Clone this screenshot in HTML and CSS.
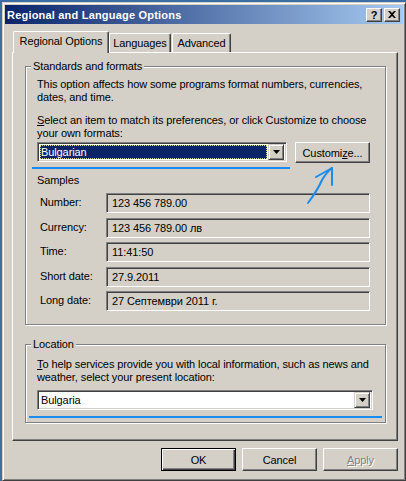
FILE: index.html
```html
<!DOCTYPE html>
<html>
<head>
<meta charset="utf-8">
<link rel="stylesheet" href="styles.css">
</head>
<body>
<div class="desktop">
  <div class="window">
    <div class="titlebar">
      <span class="title">Regional and Language Options</span>
      <div class="tb-buttons">
        <span class="tb-btn help">?</span>
        <span class="tb-btn close"><svg width="8" height="7" viewBox="0 0 8 7"><path d="M0 0h2l2 2 2-2h2L5 3.5 8 7H6L4 5 2 7H0l3-3.5z" fill="#000"/></svg></span>
      </div>
    </div>
    <div class="client">
      <div class="tabs">
        <div class="tab active">Regional Options</div>
        <div class="tab t-lang">Languages</div>
        <div class="tab t-adv">Advanced</div>
      </div>
      <div class="panel">
        <div class="group g1">
          <div class="legend">Standards and formats</div>
          <p class="text t1">This option affects how some programs format numbers, currencies,<br>dates, and time.</p>
          <p class="text t2"><u>S</u>elect an item to match its preferences, or click Customize to choose<br>your own formats:</p>
          <div class="combo-row">
            <div class="combo c1">
              <div class="combo-field"><span class="hl">Bulgarian</span></div>
              <div class="drop-btn"><svg width="7" height="4" viewBox="0 0 7 4"><path d="M0 0h7L3.5 4z" fill="#000"/></svg></div>
            </div>
            <div class="btn customize">Customi<u>z</u>e...</div>
          </div>
          <div class="mark mark1"></div>
          <div class="samples-label">Samples</div>
          <div class="samples">
            <div class="row"><span class="lbl">Number:</span><div class="ro">123 456 789.00</div></div>
            <div class="row"><span class="lbl">Currency:</span><div class="ro">123 456 789.00 лв</div></div>
            <div class="row"><span class="lbl">Time:</span><div class="ro">11:41:50</div></div>
            <div class="row"><span class="lbl">Short date:</span><div class="ro">27.9.2011</div></div>
            <div class="row"><span class="lbl">Long date:</span><div class="ro">27 Септември 2011 г.</div></div>
          </div>
        </div>
        <div class="group g2">
          <div class="legend">Location</div>
          <p class="text t3"><u>T</u>o help services provide you with local information, such as news and<br>weather, select your present location:</p>
          <div class="combo c2">
            <div class="combo-field plain">Bulgaria</div>
            <div class="drop-btn"><svg width="7" height="4" viewBox="0 0 7 4"><path d="M0 0h7L3.5 4z" fill="#000"/></svg></div>
          </div>
          <div class="mark mark2"></div>
        </div>
      </div>
      <div class="buttons">
        <div class="btn dlg default">OK</div>
        <div class="btn dlg">Cancel</div>
        <div class="btn dlg disabled"><u>A</u>pply</div>
      </div>
    </div>
  </div>
  <svg class="arrow" width="406" height="481" viewBox="0 0 406 481">
    <path d="M308 203 C 314 195, 319 187, 322 180 C 325 175, 328 171, 332 168" fill="none" stroke="#1a8cf0" stroke-width="2" stroke-linecap="round"/>
    <path d="M316 177 L332 168 L332 185" fill="none" stroke="#1a8cf0" stroke-width="2" stroke-linecap="round" stroke-linejoin="round"/>
  </svg>
</div>
</body>
</html>
```

FILE: styles.css
```css
* { box-sizing: border-box; }
html, body { margin: 0; padding: 0; }
body { font-family: "Liberation Sans", Arial, sans-serif; font-size: 11px; color: #000; letter-spacing: -0.1px; }

.desktop {
  width: 406px;
  height: 481px;
  background: #3a6ea5;
  overflow: hidden;
  position: relative;
  padding: 2px 0 0 2px;
}

.window {
  width: 404px;
  height: 479px;
  background: #d4d0c8;
  border: 1px solid;
  border-color: #d4d0c8 #404040 #404040 #d4d0c8;
  box-shadow: inset 1px 1px #fff, inset -1px -1px #808080;
  padding: 2px;
}

.titlebar {
  height: 19px;
  background: linear-gradient(to right, #0a246a, #a6caf0);
  display: flex;
  align-items: center;
  justify-content: space-between;
  padding: 0 3px 0 2px;
}
.title { color: #fff; font-weight: bold; font-size: 11px; letter-spacing: 0.2px; }
.tb-buttons { display: flex; gap: 1px; }
.tb-btn {
  width: 16px;
  height: 14px;
  background: #d4d0c8;
  border: 1px solid;
  border-color: #fff #404040 #404040 #fff;
  box-shadow: inset -1px -1px #808080;
  display: flex;
  align-items: center;
  justify-content: center;
}
.help { font-weight: bold; font-size: 11px; line-height: 12px; }
.close { margin-left: 1px; }

.client { padding: 7px 5px 0 7px; }

.tabs {
  display: flex;
  align-items: flex-end;
  height: 22px;
  margin: 0 0 -1px 1px;
  position: relative;
  z-index: 1;
}
.tab {
  height: 19px;
  margin-bottom: 1px;
  background: #d4d0c8;
  border-top: 1px solid #fff;
  border-left: 1px solid #fff;
  border-right: 1px solid #404040;
  box-shadow: inset -1px 0 #808080;
  border-radius: 2px 2px 0 0;
  display: flex;
  align-items: center;
  justify-content: center;
  padding-bottom: 1px;
}
.tab.active { width: 96px; height: 22px; margin-bottom: 0; padding-bottom: 3px; }
.t-lang { width: 62px; }
.t-adv { width: 59px; margin-left: 1px; }

.panel {
  width: 386px;
  height: 389px;
  border: 1px solid;
  border-color: #fff #404040 #404040 #fff;
  box-shadow: inset -1px -1px #808080;
  padding: 13px 10px 0 12px;
}

.group {
  width: 361px;
  border: 1px solid #808080;
  box-shadow: inset 1px 1px #fff, 1px 1px #fff;
  padding: 0 11px;
}
.g1 { padding-bottom: 13px; }
.g2 { margin-top: 19px; padding-bottom: 4px; }

.legend {
  width: max-content;
  margin: -7px 0 0 -6px;
  padding: 0 2px;
  background: #d4d0c8;
  line-height: 13px;
}

.text { margin: 0; line-height: 13px; white-space: nowrap; }
.t1 { margin-top: 5px; }
.t2 { margin-top: 10px; }
.t3 { margin-top: 7px; }

.combo-row { display: flex; align-items: flex-start; gap: 8px; margin-top: 2px; }

.combo {
  height: 20px;
  background: #fff;
  border: 1px solid;
  border-color: #808080 #fff #fff #808080;
  box-shadow: inset 1px 1px #404040, inset -1px -1px #d4d0c8;
  padding: 2px;
  display: flex;
}
.c1 { width: 250px; }
.c2 { width: 336px; margin-top: 6px; }

.combo-field { flex: 1; display: flex; align-items: stretch; }
.combo-field.plain { align-items: center; padding-left: 1px; }
.hl {
  flex: 1;
  background: #0a246a;
  color: #fff;
  outline: 1px dotted #d8d8a0;
  outline-offset: -1px;
  padding-left: 1px;
  display: flex;
  align-items: center;
  margin-right: 1px;
}

.drop-btn {
  width: 16px;
  height: 16px;
  margin: -1px 0;
  background: #d4d0c8;
  border: 1px solid;
  border-color: #d4d0c8 #404040 #404040 #d4d0c8;
  box-shadow: inset 1px 1px #fff, inset -1px -1px #808080;
  display: flex;
  align-items: center;
  justify-content: center;
}

.btn {
  background: #d4d0c8;
  border: 1px solid;
  border-color: #fff #404040 #404040 #fff;
  box-shadow: inset -1px -1px #808080;
  display: flex;
  align-items: center;
  justify-content: center;
}
.customize { width: 75px; height: 21px; }

.mark { height: 2px; background: #1a8cf0; }
.mark1 { width: 258px; margin: 4px 0 0 -5px; }
.mark2 { width: 353px; margin: 6px 0 0 -8px; }

.samples-label { margin-top: 5px; line-height: 13px; }
.samples { margin-top: 6px; }
.row { display: flex; align-items: center; height: 20px; }
.row + .row { margin-top: 4.5px; }
.lbl { width: 69px; padding-left: 3px; padding-bottom: 2px; }
.ro {
  width: 264px;
  height: 20px;
  background: #d4d0c8;
  border: 1px solid;
  border-color: #808080 #fff #fff #808080;
  box-shadow: inset 1px 1px #404040, inset -1px -1px #d4d0c8;
  padding-left: 5px;
  display: flex;
  align-items: center;
}

.buttons { display: flex; justify-content: flex-end; gap: 6px; margin-top: 7px; width: 386px; }
.dlg { width: 75px; height: 23px; }
.default {
  border: 1px solid #000;
  box-shadow: inset 1px 1px #fff, inset -1px -1px #404040, inset -2px -2px #808080;
}
.disabled { color: #808080; text-shadow: 1px 1px #fff; }

.arrow { position: absolute; left: 0; top: 0; pointer-events: none; }
```
